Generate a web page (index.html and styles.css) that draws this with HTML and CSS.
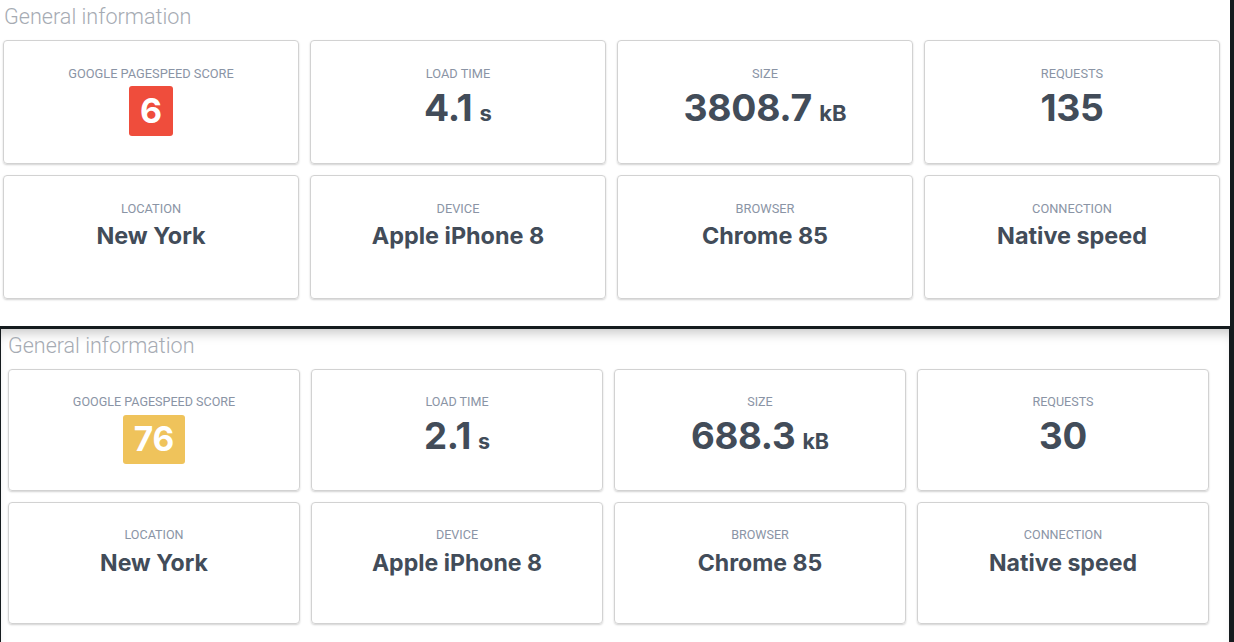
FILE: index.html
```html
<!DOCTYPE html>
<html>
<head>
<meta charset="utf-8">
<link rel="stylesheet" href="styles.css">
</head>
<body>
<section class="panel panel-top">
  <h2 class="title">General information</h2>
  <div class="grid">
    <div class="card"><div class="label">Google PageSpeed score</div><div class="badge badge-red">6</div></div>
    <div class="card"><div class="label">Load time</div><div class="value">4.1<span class="unit"> s</span></div></div>
    <div class="card"><div class="label">Size</div><div class="value">3808.7<span class="unit"> kB</span></div></div>
    <div class="card"><div class="label">Requests</div><div class="value">135</div></div>
    <div class="card"><div class="label">Location</div><div class="value small">New York</div></div>
    <div class="card"><div class="label">Device</div><div class="value small">Apple iPhone 8</div></div>
    <div class="card"><div class="label">Browser</div><div class="value small">Chrome 85</div></div>
    <div class="card"><div class="label">Connection</div><div class="value small">Native speed</div></div>
  </div>
</section>
<section class="panel panel-bottom">
  <h2 class="title">General information</h2>
  <div class="grid">
    <div class="card"><div class="label">Google PageSpeed score</div><div class="badge badge-yellow">76</div></div>
    <div class="card"><div class="label">Load time</div><div class="value">2.1<span class="unit"> s</span></div></div>
    <div class="card"><div class="label">Size</div><div class="value">688.3<span class="unit"> kB</span></div></div>
    <div class="card"><div class="label">Requests</div><div class="value">30</div></div>
    <div class="card"><div class="label">Location</div><div class="value small">New York</div></div>
    <div class="card"><div class="label">Device</div><div class="value small">Apple iPhone 8</div></div>
    <div class="card"><div class="label">Browser</div><div class="value small">Chrome 85</div></div>
    <div class="card"><div class="label">Connection</div><div class="value small">Native speed</div></div>
  </div>
</section>
</body>
</html>
```
FILE: styles.css
```css
html, body {
  margin: 0;
  padding: 0;
  background: #151b1e;
  height: 642px;
  overflow: hidden;
}
body {
  font-family: Inter, "Noto Sans", sans-serif;
}
.panel {
  background: #fff;
  box-sizing: border-box;
}
.panel-top {
  width: 1230px;
  height: 326px;
  padding-left: 3px;
}
.panel-bottom {
  width: 1228px;
  height: 313px;
  margin-top: 3px;
  margin-left: 1px;
  padding-left: 7px;
  box-shadow: inset 0 10px 12px -6px rgba(0, 0, 0, 0.22);
}
.title {
  margin: 0;
  height: 40px;
  line-height: 34px;
  font-family: Roboto, "Liberation Sans", sans-serif;
  font-weight: 300;
  font-size: 21.6px;
  color: #a6abb3;
  padding-left: 1px;
}
.panel-bottom .title {
  padding-left: 0;
  font-size: 21.5px;
}
.grid {
  display: grid;
  grid-template-columns: repeat(4, 296px);
  grid-auto-rows: 124px;
  gap: 11px;
}
.panel-bottom .grid {
  grid-template-columns: repeat(4, 292px);
  grid-auto-rows: 122px;
}
.card {
  box-sizing: border-box;
  border: 1px solid #d2d2d2;
  border-radius: 4px;
  box-shadow: 0 1px 2px rgba(0, 0, 0, 0.18);
  display: flex;
  flex-direction: column;
  align-items: center;
  padding-top: 25px;
}
.panel-bottom .card {
  padding-top: 24px;
}
.label {
  font-family: Roboto, "Liberation Sans", sans-serif;
  font-size: 12.8px;
  line-height: 16px;
  text-transform: uppercase;
  color: #8a94a5;
}
.panel-bottom .label {
  font-size: 12.55px;
}
.value {
  margin-top: 2px;
  font-weight: 700;
  font-size: 37.3px;
  line-height: 48px;
  color: #424c59;
  letter-spacing: -0.3px;
}
.panel-bottom .value {
  font-size: 36.7px;
}
.value.small {
  margin-top: 4px;
  font-size: 23.4px;
  line-height: 30px;
  letter-spacing: 0;
}
.panel-bottom .value.small {
  font-size: 23.1px;
  margin-top: 5px;
}
.unit {
  font-size: 22px;
  letter-spacing: 0;
  margin-left: 2px;
}
.panel-bottom .unit {
  font-size: 21.5px;
}
.badge {
  margin-top: 4px;
  padding: 0 11px;
  height: 50px;
  line-height: 50px;
  border-radius: 3px;
  color: #fff;
  font-weight: 700;
  font-size: 34px;
}
.panel-bottom .badge {
  margin-top: 5px;
  height: 49px;
  line-height: 49px;
  font-size: 33.5px;
}
.badge-red {
  background: #ef4d3c;
}
.badge-yellow {
  background: #efc35b;
}
```
